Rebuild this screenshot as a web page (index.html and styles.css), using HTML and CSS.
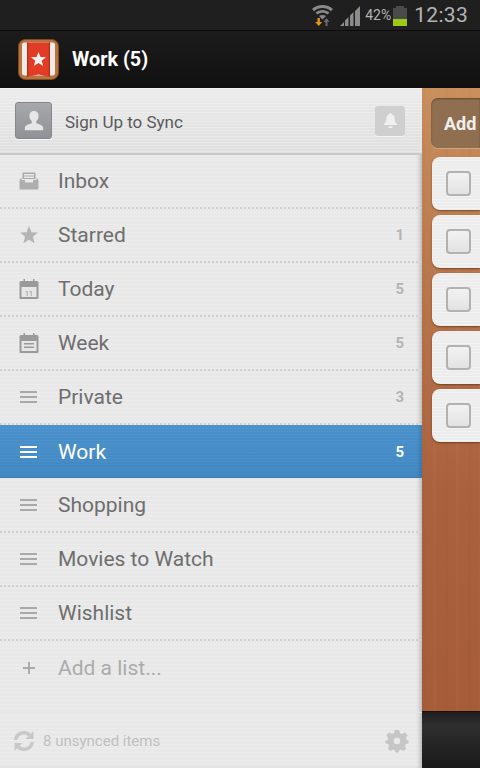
FILE: index.html

```html
<!DOCTYPE html>
<html lang="en">
<head>
  <meta charset="UTF-8" />
  <title>Wunderlist</title>
  <link rel="stylesheet" href="styles.css">
</head>
<body>

  <div class="status-bar">
    <svg class="wifi" width="21" height="22" viewBox="0 0 21 22">
      <path d="M0 5 C5.500 -0.500 15.500 -0.500 21 5 L18.800 7.200 C14.500 3 6.500 3 2.200 7.200 Z" fill="#8a8a8a"/>
      <path d="M3.500 8.500 C7.500 5 13.500 5 17.500 8.500 L15.500 10.500 C12.500 8 8.500 8 5.500 10.500 Z" fill="#8a8a8a"/>
      <path d="M7 12 C9 10.500 12 10.500 14 12 L10.500 15.500 Z" fill="#8a8a8a"/>
      <path d="M5.500 14 h2.400 v4 h2.300 l-3.500 4 l-3.500 -4 h2.300 Z" fill="#e8941c"/>
      <path d="M13.500 22 v-4 h-2 l3 -4 l3 4 h-2 v4 Z" fill="#6a6a6a"/>
    </svg>
    <svg class="signal" width="21" height="20" viewBox="0 0 21 20">
      <path d="M0 20 L4 16 V20 Z M5 20 V14.500 L8.500 11 V20 Z M10 20 V9.500 L13.500 6 V20 Z M15 20 V5 L20 0 V20 Z" fill="#8c8c8c"/>
    </svg>
    <span class="battery-text">42%</span>
    <span class="battery"><span class="battery-fill"></span></span>
    <span class="clock">12:33</span>
  </div>

  <div class="title-bar">
    <svg class="app-icon" width="41" height="41" viewBox="0 0 41 41">
      <rect x="0.500" y="0.500" width="40" height="40" rx="7" fill="#b8733f" stroke="#7d4a24"/>
      <rect x="4" y="3.500" width="33" height="33" rx="2.500" fill="#efece8"/>
      <path d="M9 3.500 H32 V38 L20.500 35.500 L9 38 Z" fill="#e03c26"/>
      <rect x="9" y="3.500" width="1.200" height="34" fill="#b52c1a"/>
      <rect x="30.800" y="3.500" width="1.200" height="34" fill="#b52c1a"/>
      <path d="M20.500 13 L22.500 18 L28 18.300 L23.700 21.800 L25.200 27 L20.500 24 L15.800 27 L17.300 21.800 L13 18.300 L18.500 18 Z" fill="#f4f1ee"/>
    </svg>
    <span class="title-text">Work (5)</span>
  </div>

  <div class="main">
    <div class="sidebar">
      <div class="sync-row">
        <span class="avatar">
          <svg width="22" height="22" viewBox="0 0 24 24">
            <path d="M12 1 C15.500 1 17 3.700 17 6.500 C17 9 15.800 11 14.500 12 V14.500 C17 15.500 21.500 16.500 22 19 V22 H2 V19 C2.500 16.500 7 15.500 9.500 14.500 V12 C8.200 11 7 9 7 6.500 C7 3.700 8.500 1 12 1 Z" fill="#e6e6e6"/>
          </svg>
        </span>
        <span class="sync-text">Sign Up to Sync</span>
        <span class="bell">
          <svg width="15" height="17" viewBox="0 0 18 20">
            <path d="M9 1 C10 1 10.500 1.700 10.500 2.500 C13 3.200 14 5.500 14 8 C14 11 15 12.500 17 14.500 V15.500 H1 V14.500 C3 12.500 4 11 4 8 C4 5.500 5 3.200 7.500 2.500 C7.500 1.700 8 1 9 1 Z" fill="#f0f0f0"/>
            <rect x="6.500" y="17" width="5" height="2" rx="1" fill="#f0f0f0"/>
          </svg>
        </span>
      </div>

      <div class="list-row">
        <svg class="row-icon" width="20" height="20" viewBox="0 0 20 20">
          <path d="M3.500 1.500 H16.500 V8 H3.500 Z" fill="#a9a9a9"/>
          <rect x="5" y="3" width="10" height="1.500" fill="#ececec"/>
          <rect x="5" y="5.500" width="10" height="1.500" fill="#ececec"/>
          <path d="M0.500 9 L2.500 6.500 V9 H6 V11.500 H14 V9 H17.500 V6.500 L19.500 9 V17.500 Q19.500 18.500 18.500 18.500 H1.500 Q0.500 18.500 0.500 17.500 Z" fill="#aeaeae"/>
        </svg>
        <span class="row-name">Inbox</span>
      </div>
      <div class="list-row">
        <svg class="row-icon" width="20" height="20" viewBox="0 0 20 20">
          <path d="M10 1 L12.500 7.300 L19 7.600 L13.900 11.800 L15.600 18.300 L10 14.700 L4.400 18.300 L6.100 11.800 L1 7.600 L7.500 7.300 Z" fill="#b4b4b4"/>
        </svg>
        <span class="row-name">Starred</span>
        <span class="row-count">1</span>
      </div>
      <div class="list-row">
        <svg class="row-icon" width="20" height="22" viewBox="0 0 20 22">
          <path d="M2 3 H4.500 V1 H6 V3 H14 V1 H15.500 V3 H18 Q19.500 3 19.500 4.500 V20 Q19.500 21 18.500 21 H1.500 Q0.500 21 0.500 20 V4.500 Q0.500 3 2 3 Z" fill="#9a9a9a"/>
          <rect x="2.500" y="9" width="15" height="10" fill="#e6e6e6"/>
          <text x="10" y="17.500" class="cal-day">11</text>
        </svg>
        <span class="row-name">Today</span>
        <span class="row-count">5</span>
      </div>
      <div class="list-row">
        <svg class="row-icon" width="20" height="22" viewBox="0 0 20 22">
          <path d="M2 3 H4.500 V1 H6 V3 H14 V1 H15.500 V3 H18 Q19.500 3 19.500 4.500 V20 Q19.500 21 18.500 21 H1.500 Q0.500 21 0.500 20 V4.500 Q0.500 3 2 3 Z" fill="#9a9a9a"/>
          <rect x="2.500" y="9" width="15" height="10" fill="#e6e6e6"/>
          <rect x="5" y="11" width="10" height="1.500" fill="#9a9a9a"/>
          <rect x="5" y="14.500" width="10" height="1.500" fill="#9a9a9a"/>
        </svg>
        <span class="row-name">Week</span>
        <span class="row-count">5</span>
      </div>
      <div class="list-row">
        <span class="burger"></span>
        <span class="row-name">Private</span>
        <span class="row-count">3</span>
      </div>
      <div class="list-row active">
        <span class="burger"></span>
        <span class="row-name">Work</span>
        <span class="row-count">5</span>
      </div>
      <div class="list-row">
        <span class="burger"></span>
        <span class="row-name">Shopping</span>
      </div>
      <div class="list-row">
        <span class="burger"></span>
        <span class="row-name">Movies to Watch</span>
      </div>
      <div class="list-row">
        <span class="burger"></span>
        <span class="row-name">Wishlist</span>
      </div>
      <div class="list-row add-row">
        <svg class="row-icon" width="20" height="20" viewBox="0 0 20 20">
          <path d="M9 4 H11 V9 H16 V11 H11 V16 H9 V11 H4 V9 H9 Z" fill="#ababab"/>
        </svg>
        <span class="row-name">Add a list...</span>
      </div>

      <div class="sidebar-footer">
        <svg width="22" height="24" viewBox="0 0 22 24">
          <path d="M1 11 C1.500 5.500 5.500 2 11 2 C13.800 2 16 3 17.800 4.700 L20.500 2 V10 H12.500 L15.300 7.200 C14.100 6.100 12.700 5.500 11 5.500 C7.500 5.500 5 7.700 4.500 11 Z" fill="#c8c8c8"/>
          <path d="M21 13 C20.500 18.500 16.500 22 11 22 C8.200 22 6 21 4.200 19.300 L1.500 22 V14 H9.500 L6.700 16.800 C7.900 17.900 9.300 18.500 11 18.500 C14.500 18.500 17 16.300 17.500 13 Z" fill="#c8c8c8"/>
        </svg>
        <span class="footer-text">8 unsynced items</span>
        <svg class="gear" width="24" height="24" viewBox="0 0 24 24">
          <path fill-rule="evenodd" d="M9.800 1 H14.200 L14.900 4.200 L17 5.100 L19.800 3.300 L22.700 6.200 L20.900 9 L21.800 11 L23.500 11.800 V14.200 L20.800 14.900 L19.900 17 L21 19.800 L18.800 22 L16 20.500 L14.200 21.300 L13.500 23.500 H10.500 L9.800 21.300 L8 20.500 L5.200 22 L3 19.800 L4.100 17 L3.200 14.900 L0.500 14.200 V11.800 L3.100 11 L3.100 9 L1.300 6.200 L4.200 3.300 L7 5.100 L9.100 4.200 Z M12 8.800 A3.200 3.200 0 1 0 12 15.200 A3.200 3.200 0 1 0 12 8.800 Z" fill="#c6c6c6"/>
        </svg>
      </div>
    </div>

    <div class="task-pane">
      <div class="add-task">Add</div>
      <div class="task-card"><span class="check"></span></div>
      <div class="task-card"><span class="check"></span></div>
      <div class="task-card"><span class="check"></span></div>
      <div class="task-card"><span class="check"></span></div>
      <div class="task-card"><span class="check"></span></div>
      <div class="toolbar"></div>
    </div>
  </div>

</body>
</html>
```

FILE: styles.css

```css
* {
  box-sizing: border-box;
}

body {
  margin: 0;
  width: 480px;
  height: 768px;
  overflow: hidden;
  display: flex;
  flex-direction: column;
  font-family: Roboto, sans-serif;
  background: #111;
}

.status-bar {
  height: 31px;
  display: flex;
  align-items: center;
  justify-content: flex-end;
  padding-right: 12px;
  background: #1f1f1f;
  border-bottom: 1px solid #0c0c0c;
  color: #b4b4b4;
}

.wifi {
  margin-right: 7px;
}

.signal {
  margin-right: 4px;
  margin-top: 1px;
}

.battery-text {
  font-size: 14px;
  margin-right: 2px;
}

.battery {
  width: 14px;
  height: 18px;
  margin-top: 3px;
  margin-right: 7px;
  display: flex;
  align-items: flex-end;
  background: #4a4a4a;
  position: relative;
}

.battery::before {
  content: "";
  position: absolute;
  top: -2px;
  left: 3px;
  width: 8px;
  height: 2px;
  background: #4a4a4a;
}

.battery-fill {
  width: 100%;
  height: 7px;
  background: #9ccb14;
}

.clock {
  font-size: 21px;
  letter-spacing: 0.3px;
}

.title-bar {
  height: 57px;
  display: flex;
  align-items: center;
  padding-left: 18px;
  gap: 13px;
  background: linear-gradient(#1c1c1c, #101010);
}

.title-text {
  color: #fff;
  font-size: 19.800px;
  font-weight: 700;
}

.main {
  flex: 1;
  display: flex;
  min-height: 0;
}

.sidebar {
  width: 422px;
  display: flex;
  flex-direction: column;
  background-color: #e9e9e9;
  background-image: repeating-linear-gradient(#ececec 0 1px, #e7e7e7 1px 2px, #e9e9e9 2px 4px);
  box-shadow: inset -4px 0 4px -2px rgba(0, 0, 0, 0.22);
}

.sync-row {
  height: 67px;
  flex: none;
  display: flex;
  align-items: center;
  padding: 0 17px 0 15px;
  border-bottom: 2px solid #c9c9c9;
  background-image: repeating-linear-gradient(rgba(255, 255, 255, 0.25) 0 1px, transparent 1px 3px), linear-gradient(#ebebeb, #dfdfdf);
}

.avatar {
  width: 37px;
  height: 37px;
  display: flex;
  align-items: center;
  justify-content: center;
  border-radius: 3px;
  background: linear-gradient(#a6a8ab, #909296);
  border: 1px solid #85878a;
  box-shadow: 0 1px 0 #f8f8f8;
}

.sync-text {
  flex: 1;
  margin-left: 13px;
  margin-top: 2px;
  font-size: 17px;
  color: #5a5a5a;
}

.bell {
  width: 30px;
  height: 30px;
  display: flex;
  align-items: center;
  justify-content: center;
  border-radius: 3px;
  background: #cfcfcf;
  box-shadow: 0 1px 0 #f4f4f4;
}

.list-row {
  height: 54px;
  flex: none;
  display: flex;
  align-items: center;
  padding: 0 18px 0 19px;
  border-bottom: 2px dotted #cfcfcf;
}

.row-icon {
  flex: none;
}

.row-name {
  flex: 1;
  margin-left: 19px;
  font-size: 21px;
  color: #6e6e6e;
}

.row-count {
  font-size: 15px;
  font-weight: 700;
  color: #b4b4b4;
}

.cal-day {
  font-family: Roboto, sans-serif;
  font-size: 7px;
  text-anchor: middle;
  fill: #8f8f8f;
}

.burger {
  width: 17px;
  height: 12px;
  margin: 0 2px 0 1px;
  flex: none;
  background: repeating-linear-gradient(#a9a9a9 0 2px, transparent 2px 5px);
}

.list-row.active {
  height: 53px;
  margin-bottom: 1px;
  border-bottom: 0;
  background-color: #458cc6;
  background-image: repeating-linear-gradient(rgba(255, 255, 255, 0.03) 0 1px, transparent 1px 3px), linear-gradient(#4b92cc, #4187c1);
  box-shadow: inset 0 -1px 0 #3a78ad, inset -4px 0 4px -2px rgba(0, 0, 0, 0.18);
}

.list-row.active .row-name,
.list-row.active .row-count {
  color: #fff;
}

.list-row.active .burger {
  background: repeating-linear-gradient(#fff 0 2px, transparent 2px 5px);
}

.add-row {
  border-bottom: 0;
}

.add-row .row-name {
  color: #ababab;
}

.sidebar-footer {
  flex: 1;
  display: flex;
  align-items: center;
  padding: 0 13px 0 13px;
  margin-top: 17px;
  border-top: 1px solid #e4e4e4;
}

.footer-text {
  flex: 1;
  margin-left: 8px;
  font-size: 15px;
  color: #c0c0c0;
}

.task-pane {
  flex: 1;
  display: flex;
  flex-direction: column;
  align-items: flex-end;
  padding-top: 10px;
  background-image:
    repeating-linear-gradient(90deg, rgba(90, 40, 10, 0.025) 0 3px, transparent 3px 11px, rgba(255, 220, 180, 0.025) 11px 14px, transparent 14px 23px),
    linear-gradient(#c98f5c 0, #b9774c 190px, #aa623e 400px, #a65c38 622px);
  overflow: hidden;
}

.add-task {
  width: 49px;
  height: 50px;
  flex: none;
  margin-bottom: 9px;
  padding-left: 13px;
  display: flex;
  align-items: center;
  border-radius: 7px 0 0 7px;
  background: #8f6f4f;
  box-shadow: inset 0 1px 2px rgba(0, 0, 0, 0.35), 0 1px 0 rgba(255, 255, 255, 0.25);
  color: #eee;
  font-size: 18px;
  font-weight: 700;
}

.task-card {
  width: 48px;
  height: 53px;
  flex: none;
  margin-bottom: 5px;
  padding-left: 14px;
  display: flex;
  align-items: center;
  border-radius: 8px 0 0 8px;
  background-color: #eeeeee;
  background-image: repeating-linear-gradient(#f2f2f2 0 1px, #ececec 1px 3px);
  box-shadow: 0 1px 2px rgba(60, 30, 10, 0.55);
}

.check {
  width: 25px;
  height: 25px;
  border: 2px solid #b2b2b2;
  border-radius: 4px;
  background: linear-gradient(#f2f2f2, #e2e2e2);
}

.toolbar {
  width: 100%;
  height: 57px;
  flex: none;
  margin-top: auto;
  background: linear-gradient(#1e1e1e, #2f2f2f 25%, #1a1a1a);
  border-top: 1px solid #1a1008;
}
```
